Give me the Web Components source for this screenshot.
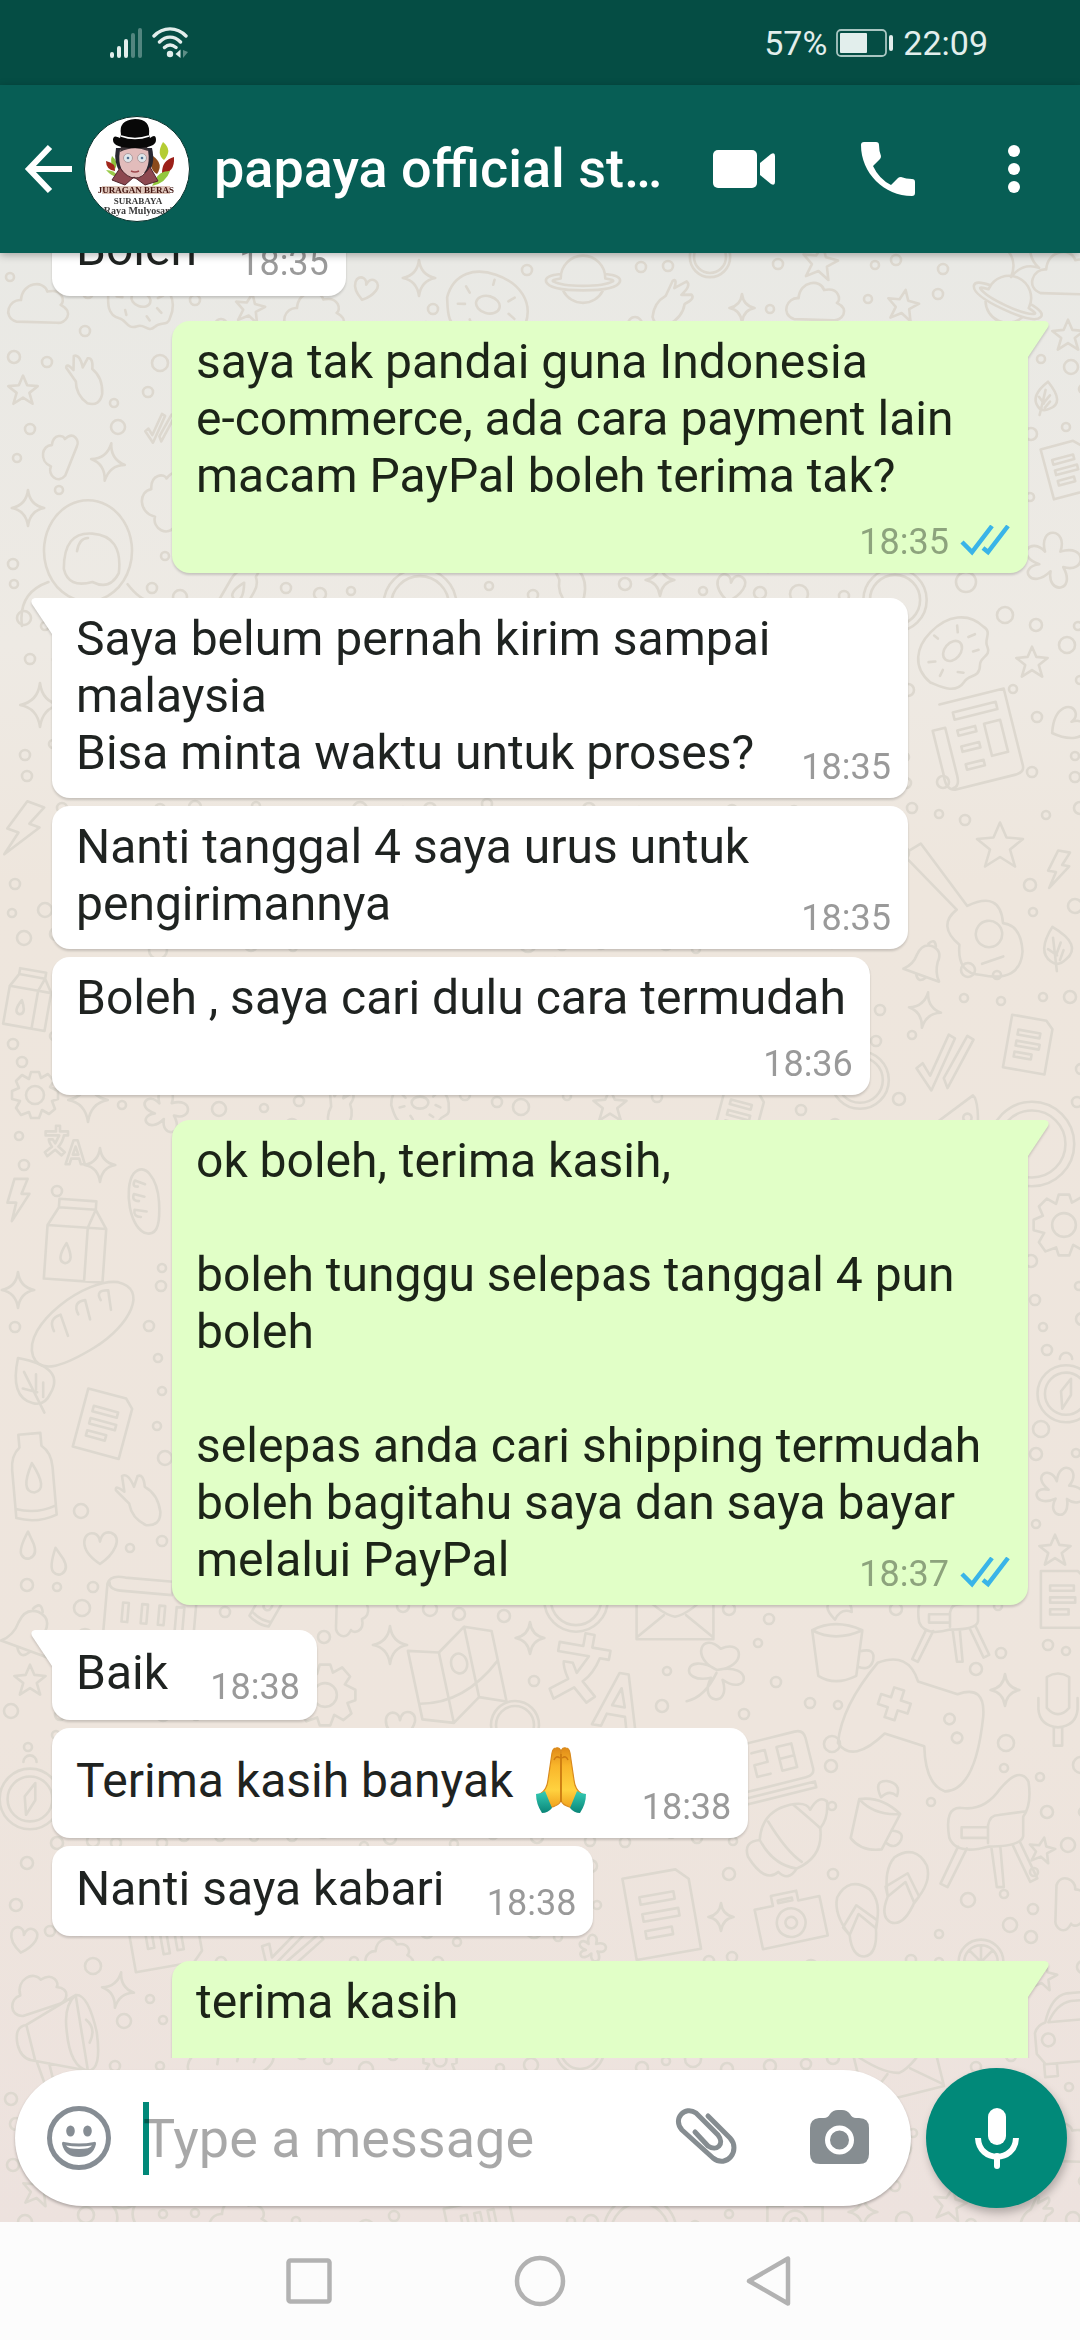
<!DOCTYPE html>
<html lang="ms">
<head>
<meta charset="utf-8">
<meta name="viewport" content="width=device-width, initial-scale=1">
<title>papaya official store</title>
<style>
  html, body {
    margin: 0;
    height: 100%;
  }
  body {
    font-family: Roboto, "Liberation Sans", sans-serif;
    color: #1f2321;
  }
</style>
</head>
<body>
<chat-screen>
  <status-bar slot="top" battery="57%" time="22:09"></status-bar>
  <chat-header slot="top">papaya official st…</chat-header>
  <message-list scroll="47">
    <chat-bubble time="18:35" compact>Boleh</chat-bubble>
    <chat-bubble time="18:35" out first below>saya tak pandai guna Indonesia
e-commerce, ada cara payment lain macam PayPal boleh terima tak?</chat-bubble>
    <chat-bubble time="18:35" first>Saya belum pernah kirim sampai malaysia
Bisa minta waktu untuk proses?</chat-bubble>
    <chat-bubble time="18:35">Nanti tanggal 4 saya urus untuk pengirimannya</chat-bubble>
    <chat-bubble time="18:36" below>Boleh , saya cari dulu cara termudah</chat-bubble>
    <chat-bubble time="18:37" out first>ok boleh, terima kasih,

boleh tunggu selepas tanggal 4 pun boleh

selepas anda cari shipping termudah boleh bagitahu saya dan saya bayar melalui PayPal</chat-bubble>
    <chat-bubble time="18:38" first compact>Baik</chat-bubble>
    <chat-bubble time="18:38">Terima kasih banyak <praying-hands></praying-hands></chat-bubble>
    <chat-bubble time="18:38" compact>Nanti saya kabari</chat-bubble>
    <chat-bubble out first wide>terima kasih</chat-bubble>
  </message-list>
  <message-composer></message-composer>
  <nav-bar slot="bottom"></nav-bar>
</chat-screen>

<script>
/**
 * Creates a template from a string of markup.
 *
 * @param {string} markup - the markup.
 * @returns {HTMLTemplateElement} the template.
 */
const createTemplate = (markup) => {
  const template = document.createElement('template')
  template.innerHTML = markup
  return template
}

/**
 * Base class that clones its static template into a shadow root.
 */
class BaseElement extends HTMLElement {
  constructor () {
    super()
    this.attachShadow({ mode: 'open' })
      .appendChild(this.constructor.template.content.cloneNode(true))
  }
}

customElements.define('status-bar',
  class extends BaseElement {
    static template = createTemplate(`
      <style>
        :host {
          display: flex;
          align-items: center;
          justify-content: space-between;
          box-sizing: border-box;
          height: 85px;
          padding: 0 92px 0 108px;
          background: #054d44;
          color: #e2eeec;
          font-size: 34px;
          line-height: 40px;
        }
        div {
          display: flex;
          align-items: center;
          gap: 8px;
        }
        svg { display: block; }
      </style>
      <div>
        <svg width="36" height="32" viewBox="0 0 36 32" stroke-width="4" stroke-linecap="round" stroke="#e2eeec">
          <path d="M4 27v2M11 21v8M18 14v15"/>
          <path d="M25 8v21M32 3v26" opacity=".35"/>
        </svg>
        <svg width="38" height="32" viewBox="0 0 38 32" fill="none" stroke="#e2eeec" stroke-width="3.4" stroke-linecap="round">
          <path d="M2 9C11-.5 25-.5 34 9M7.500 15C14 8.500 22 8.500 28.500 15M12.500 20.500C16 17.300 20 17.300 24 20.500"/>
          <circle cx="18" cy="27" r="3.200" fill="#e2eeec" stroke="none"/>
          <path d="M23.500 27l5-4.500v8.500z" fill="#e2eeec" stroke="none"/>
          <path d="M31 23l5 2-5 6z" fill="#e2eeec" stroke="none" opacity=".4"/>
        </svg>
      </div>
      <div>
        <span class="battery"></span>
        <svg width="60" height="30" viewBox="0 0 60 30">
          <rect x="2" y="2" width="49" height="26" rx="4" fill="none" stroke="#a9c6c2" stroke-width="1.800"/>
          <rect x="5" y="5" width="27" height="20" rx="1" fill="#e2eeec"/>
          <rect x="54" y="7" width="4" height="16" rx="2" fill="#e2eeec"/>
        </svg>
        <span class="time"></span>
      </div>
    `)

    connectedCallback () {
      this.shadowRoot.querySelector('.battery').textContent = this.getAttribute('battery')
      this.shadowRoot.querySelector('.time').textContent = this.getAttribute('time')
    }
  })

customElements.define('contact-avatar',
  class extends BaseElement {
    static template = createTemplate(`
      <style>
        :host { display: block; width: 106px; height: 106px; }
        svg { display: block; }
      </style>
      <svg width="106" height="106" viewBox="0 0 106 106" role="img" aria-label="Juragan Beras Surabaya">
        <clipPath id="round"><circle cx="53" cy="53" r="52"/></clipPath>
        <circle cx="53" cy="53" r="52.500" fill="#fff" stroke="#06302b"/>
        <g clip-path="url(#round)">
          <path d="M79 26q10 8 1 18q-8-6-1-18z" fill="#b4cc33"/>
          <path d="M69 40q11 8 4 18q-9-5-4-18z" fill="#8a4a1b"/>
          <path d="M90 41q1 16-12 16q0-13 12-16z" fill="#9c2019"/>
          <path d="M71 64q4-9 15-9q-4 12-18 15z" fill="#93c83e"/>
          <path d="M28 40q7 6 3 13q-6-6-3-13z" fill="#8fc23c"/>
          <path d="M22 45q10 2 9 10q-9-1-9-10z" fill="#a1261b"/>
          <path d="M22 54q7 8 12 6q-4-6-12-6z" fill="#9acb4a"/>
          <path d="M32 32h36q4 18-5 25H37q-8-9-5-25z" fill="#272630"/>
          <path d="M36 34q14-7 28 0q4 24-14 29q-18-5-14-29z" fill="#e2bcbb"/>
          <path d="M36 36q14-7 28-1l-1-5H37z" fill="#3b3337"/>
          <g fill="#dfe6ea" stroke="#b09a9c" stroke-width="1">
            <circle cx="44" cy="42" r="4.500"/><circle cx="58" cy="42" r="4.500"/>
          </g>
          <circle cx="44" cy="42" r="1.300" fill="#537191"/><circle cx="58" cy="42" r="1.300" fill="#537191"/>
          <path d="M47 55q4 2 8 0" stroke="#a04a4f" stroke-width="1.500" fill="none"/>
          <path d="M36 52l-8 12 13 5 9-8 11 8 13-4-8-14q-8 12-15 11-8 0-15-10z" fill="#8d4850" stroke="#51262c"/>
          <path d="M37 19Q34 4 51 3q16 0 14 16l1 3q6-5 6 2 0 8-21 8-22 0-22-8 0-6 7-2z" fill="#080808"/>
          <path d="M37 20q14 5 28 0" stroke="#fff" stroke-width="1.400" fill="none"/>
          <path d="M18 70h68v8H18z" fill="#dfc6ba"/>
          <g font-family="Liberation Serif, serif" font-weight="700" text-anchor="middle">
            <text x="52" y="77" font-size="9" fill="#42130f">JURAGAN BERAS</text>
            <text x="54" y="88" font-size="9" fill="#3a3a3a">SURABAYA</text>
            <text x="54" y="98" font-size="10" fill="#3a3a3a">Raya Mulyosari</text>
          </g>
        </g>
      </svg>
    `)
  })

customElements.define('chat-header',
  class extends BaseElement {
    static template = createTemplate(`
      <style>
        :host {
          display: flex;
          align-items: center;
          box-sizing: border-box;
          height: 168px;
          padding: 0 52px 0 24px;
          background: #075e55;
          color: #fff;
          position: relative;
          z-index: 1;
          box-shadow: 0 2px 8px rgba(0, 0, 0, .3);
        }
        button {
          flex: none;
          padding: 0;
          border: 0;
          background: none;
          color: inherit;
        }
        svg { display: block; }
        contact-avatar { flex: none; margin-left: 10px; }
        h1 {
          flex: 1;
          min-width: 0;
          margin: 0 0 0 24px;
          overflow: hidden;
          white-space: nowrap;
          font-size: 54px;
          font-weight: 500;
          line-height: 64px;
        }
        .actions { display: flex; gap: 80px; }
      </style>
      <button aria-label="Back">
        <svg width="50" height="50" viewBox="0 0 50 50" fill="none" stroke="#fff" stroke-width="6"><path d="M26 3L5 25l21 22M4 25h44"/></svg>
      </button>
      <contact-avatar></contact-avatar>
      <h1><slot></slot></h1>
      <div class="actions">
        <button aria-label="Video call">
          <svg width="64" height="64" viewBox="0 0 64 64" fill="#fff"><rect x="1" y="13" width="44" height="38" rx="5"/><path d="M48 26l11-9q4-2 4 2v26q0 4-4 2l-11-9z"/></svg>
        </button>
        <button aria-label="Voice call">
          <svg width="64" height="64" viewBox="0 0 64 64" fill="#fff"><path d="M8 5h12q3 0 3 3 0 6 2 11 0 2-1 3l-7 7q6 13 18 19l7-7q1-1 3-1 5 2 11 2 3 0 3 3v11q0 3-3 3C28 59 5 36 5 8q0-3 3-3z"/></svg>
        </button>
        <button aria-label="More options">
          <svg width="28" height="64" viewBox="0 0 28 64" fill="#fff"><circle cx="14" cy="14" r="6"/><circle cx="14" cy="32" r="6"/><circle cx="14" cy="50" r="6"/></svg>
        </button>
      </div>
    `)
  })

// Line drawings of the wallpaper, each about 100 units wide round 0,0.
const doodles = {
  star: 'M0-45L13-15 46-12 20 9 30 43 0 24-30 43-20 9-46-12-13-15Z',
  spark: 'M0-50Q5-8 45 0 6 7 0 50-6 7-45 0-5-8 0-50Z',
  cloud: 'M-38 26C-62 18-50-12-30-10-28-40 8-44 14-24 40-30 44-6 36-2 60 10 44 30 30 28Z',
  heart: 'M0 40C-60 0-40-44-14-36Q-2-32 0-16 6-44 28-38C58-26 36 16 0 40Z',
  planet: 'M-30-3A30 30 0 0 1 30-3M-27 14A30 30 0 0 0 27 14M-30-8Q-52-6-50 2-46 14 0 14 46 14 50 2 52-6 30-8M-30-2Q-44 0-40 2-30 8 0 8 30 8 40 2 44 0 30-2',
  drop: 'M0-45Q-30 10-20 28-10 44 6 38 30 28 18-6Z',
  donut: 'M-48 0C-48-30-25-42 0-40 30-38 50-20 48 6 50 20 36 16 32 26 26 38 16 26 8 34-4 44-10 30-20 32-40 34-44 12-48 0ZM-14-4A14 10 0 1 0 14-4 14 10 0 1 0-14-4M-30-18l6 6M-34 4l8-2M28-20l-6 6M34 4l-8-4M0-28v-6M-16 18l4 6M16 16l6 4',
  page: 'M-32-44H24L36-32V42H-32ZM-18-22H18V-14H-18ZM-18-4H20V4H-18ZM-18 14H10V22H-18Z',
  news: 'M-34-46H38V40Q38 48 28 48H-40Q-50 46-48 30V-20H-34V34Q-34 46-42 46M-22-34H26V-26H-22ZM-22-14H-2V-8H-22ZM-22 4H-2V10H-22ZM8-14H26V22H8ZM-22 24H-2V30H-22Z',
  bolt: 'M-8-48H22L8-14H26L-14 48-4 6H-24Z',
  leaf: 'M-30-45Q50-30 24 14 14 36-6 30-44 20-30-45ZM-20-22L14 46M0-18V8M12-4V20M-22 6L2 12',
  bread: 'M-48 22C-54-8 10-42 38-34 64-24 44 6 8 22-20 34-44 40-48 22ZM-26 2Q-30-10-18-12L-14 8M-2-10Q-6-22 6-22L8-4M20-20Q16-30 28-28L28-10',
  bell: 'M-38 28Q-22 14-22-8-20-34 2-34 24-32 22-8 24 14 38 28ZM-8-36Q0-52 8-36M-10 30Q0 46 10 30',
  bottle: 'M-12-32V-46H12V-32Q22-24 22-8V44Q0 52-22 44V-8Q-22-24-12-32ZM0-14Q-16 16 0 18 16 16 0-14ZM-22 34Q0 42 22 34',
  carton: 'M-34-18L-22-40H22L36-18V46H-34ZM-34-18H14L22-40M14-18V46M14-18H36M-22-40V-50H22V-40M-10 2Q-22 24-10 26 2 24-10 2Z',
  gear: 'M-8-46H8L12-34 26-42 38-28 30-16 46-8V8L34 12 40 28 28 38 14 30 8 46H-8L-12 34-28 40-38 26-30 12-46 8V-8L-32-14-38-28-26-40-12-32ZM-18 0A18 18 0 1 0 18 0 18 18 0 1 0-18 0',
  guitar: 'M-44-50L-30-56 4 6Q36-4 34 26 50 30 48 54 42 82 8 70-14 66-8 40-26 20-6 8L-44-44ZM8 34A12 12 0 1 0 32 34 12 12 0 1 0 8 34M10 60L30 56',
  ticks: 'M-46 10L-36 2-24 22 6-44 16-38-22 46ZM-2 26L4 42 46-36 36-42Z',
  astronaut: 'M-38 6A40 46 0 1 1 38 6 40 46 0 0 1-38 6ZM-22 8Q-22-26 4-24 32-22 28 12 20 28 4 20-18 26-22 8ZM-10-8Q-8-20 0-20M-36 20Q-64 30-60 60M36 22Q50 40 60 36',
  hand: 'M-30-40Q-20-46-10-22L-4-40Q6-44 8-22 30-10 34 20 34 44 10 42-14 30-18 6L-40-16Q-42-26-26-14Z',
  map: 'M-44-34L-14-26 16-46 42-36V36L16 26-14 46-44 36ZM-14-26V46M16-46V26M-44 20Q0 30 42-6M0-20A8 10 0 1 1 0-2 8 10 0 0 1 0-20',
  translate: 'M-46-34H-20V-48H-10V-34H10V-24H0Q-4-6-14 4L2 18-6 26-22 12-42 28-48 18-30 4Q-38-8-38-14H-28L-22-4-12-24H-46ZM4 48L24-12H34L52 48H42L38 34H18L14 48ZM22 24H36L29 4Z',
  clover: 'M0 0C-40-10-30-50 0-30 30-50 40-10 0 0 50-20 50 30 10 12 30 50-20 50-6 12-50 30-50-20 0 0M0 4Q-10 40-34 50',
  gamepad: 'M-40-30Q-20-46-6-26H26Q44-40 50-16 62 40 40 48 24 48 14 20H-18Q-34 50-50 38-56 10-40-30ZM-30-8H-22V-16H-14V-8H-6V0H-14V8H-22V0H-30ZM22-6A4 4 0 1 0 30-6 4 4 0 1 0 22-6M32 6A4 4 0 1 0 40 6 4 4 0 1 0 32 6',
  mic: 'M-16-50Q0-60 16-50V-6Q0 12-16-6ZM-28-20V-4Q-26 20 0 22 26 20 28-4V-20M-6 22V48H6V22',
  compass: 'M-46 6A46 46 0 1 0 46 6 46 46 0 1 0-46 6M-34 6A34 34 0 1 0 34 6 34 34 0 1 0-34 6M8-18L-8 2 -6 30 8 8ZM-10-50A10 10 0 1 1 10-50',
  clock: 'M-46-30H34Q46-30 46-18V22Q46 32 34 32H-46ZM-50 40H44V48H-50M-28-16H-10V0H-28V16H-10M6-16H26V16H6ZM6 0H26',
  cup: 'M-30-26Q0-10 36-26M-30-26Q0-42 36-26L28 34Q0 48-22 34ZM32 2Q54-4 50 14 46 28 30 22M0-40Q-20-60 0-66 22-70 22-50 8-56 0-40',
  croissant: 'M-50 20Q-56 2-36 0-34-34 0-42 20-46 24-36 34-54 44-46 46-26 36-14 40 20 8 34-2 50-14 38-30 52-50 20ZM-36 0Q-20 30 8 34M-26-22Q-4 14 14 26M4-42Q30-20 36-14',
  chair: 'M-44 18Q-50-18-30-16-4-12 14-38 36-64 46-46 50-20 40-6V16Q38 28 0 28-36 38-44 18ZM0 24V4Q2-8 12-8L42-12M-30 6H0V18H-30ZM-34 28L-54 70-46 74-24 30M4 30L10 74 18 74 14 28M28 26L48 68 56 64 36 22',
  sandal: 'M-22-36Q0-60 22-36 34-16 18 14 12 50-6 48-22 44-18 16-32-16-22-36ZM-24 4L0-20 22 6 18 16 0-8-18 16Z',
  camera: 'M-46-20H-20V-34H16V-20H46V36H-46ZM-20 8A20 20 0 1 0 20 8 20 20 0 1 0-20 8M-8 8A8 8 0 1 0 8 8 8 8 0 1 0-8 8M-12-26H8V-22H-12Z',
  flower: 'M-10-12C-20-50 24-46 12-12 50-24 50 20 16 10 36 46-8 50-2 16-30 44-50 10-18 6-54-6-30-34-10-12Z',
  megaphone: 'M-46 14Q-50-6-36-8L20-42 34 44-30 32Q-42 30-46 14ZM-36-8L-26 32M20-42Q6-30 10 0 14 40 34 44 50 44 44 0 34-44 20-42M32-14Q44-4 36 12M-24 34L-14 62-4 60-10 36',
  car: 'M-44 26V0Q-40-10-30-12-20-44 0-46H50V40H-34ZM-26-12H44V-36H4Q-14-34-26-12ZM-36 10A8 8 0 1 0-20 10 8 8 0 1 0-36 10M-36 40V56H-20V40',
  envelope: 'M-48-32H48V34H-48ZM-48-30Q-20 2 0 6 20 2 48-30M-48 32L-14 4M48 32L14 4',
  ring: 'M-48 0A48 48 0 1 0 48 0 48 48 0 1 0-48 0M-38 0A38 38 0 1 0 38 0 38 38 0 1 0-38 0',
  orange: 'M-40 0A40 40 0 1 0 40 0 40 40 0 1 0-40 0M-30 0A30 30 0 1 0 30 0 30 30 0 1 0-30 0M0-30V30M-30 0H30M-21-21L21 21M-21 21L21-21',
  cheese: 'M-46 26L40-38Q50-30 46 30L-40 46ZM-30 28A6 6 0 1 0-18 28 6 6 0 1 0-30 28M0 14A7 7 0 1 0 14 14 7 7 0 1 0 0 14M26-6A6 6 0 1 0 38-6 6 6 0 1 0 26-6'
}

// name, x, y, size, turn
const placed = [
  ['cloud', 39, 306, 60, 0], ['donut', 140, 302, 70, 20], ['star', 250, 308, 32, 10], ['cloud', 315, 314, 60, 0],
  ['heart', 365, 289, 28, 15], ['spark', 419, 278, 36, 0], ['donut', 487, 308, 86, 15], ['planet', 583, 280, 74, 0],
  ['hand', 672, 304, 54, 70], ['ring', 710, 257, 42, 0], ['star', 820, 262, 38, 10], ['spark', 742, 308, 28, 0],
  ['cloud', 816, 304, 58, 0], ['star', 903, 305, 34, 10], ['planet', 1008, 300, 74, 25], ['spark', 1022, 258, 44, 30],
  ['cloud', 1066, 276, 66, 0], ['hand', 86, 380, 54, 10], ['star', 23, 390, 32, 0], ['cloud', 60, 455, 46, -70],
  ['spark', 108, 462, 38, 10], ['spark', 28, 508, 36, 0], ['ticks', 160, 428, 32, 0], ['cloud', 164, 500, 60, -80],
  ['astronaut', 88, 560, 110, 0], ['star', 1068, 335, 34, 0], ['leaf', 1046, 400, 34, 40], ['page', 1066, 470, 60, -15],
  ['flower', 1052, 560, 70, 0], ['bottle', 240, 590, 60, 30], ['ring', 420, 605, 76, 0], ['heart', 730, 588, 34, 10],
  ['hand', 570, 580, 56, 20], ['spark', 660, 580, 32, 0], ['ring', 895, 600, 66, 0], ['donut', 955, 653, 80, -50],
  ['star', 1032, 662, 34, 0], ['news', 980, 738, 92, -14], ['spark', 40, 705, 44, 0], ['heart', 1066, 725, 40, 60],
  ['bolt', 22, 830, 60, 20], ['star', 1000, 845, 50, 0], ['bolt', 1058, 870, 40, 10], ['guitar', 962, 900, 110, -8],
  ['bell', 926, 962, 50, 20], ['leaf', 1058, 950, 44, 20], ['spark', 925, 1010, 36, 10], ['ticks', 945, 1062, 62, 0],
  ['page', 1027, 1045, 62, 10], ['gear', 35, 1095, 50, 0], ['spark', 88, 1100, 44, 0], ['carton', 28, 1000, 60, 10],
  ['cheese', 945, 1122, 70, 0], ['ring', 1032, 1144, 88, 0], ['flower', 165, 1110, 56, 0], ['hand', 340, 1110, 50, 40],
  ['donut', 420, 1105, 60, 0], ['star', 610, 1105, 36, 0], ['page', 738, 1115, 60, 15], ['ring', 860, 1080, 60, 0],
  ['bolt', 18, 1200, 44, 0], ['spark', 100, 1165, 34, 0], ['translate', 64, 1145, 40, 0], ['carton', 75, 1242, 84, 4],
  ['bread', 145, 1202, 60, -70], ['gear', 1064, 1225, 66, 0], ['spark', 18, 1290, 36, 0], ['bread', 82, 1325, 110, -8],
  ['leaf', 36, 1385, 60, 0], ['page', 102, 1424, 70, 15], ['bottle', 33, 1476, 92, -5], ['hand', 140, 1500, 60, 0],
  ['heart', 100, 1548, 40, 0], ['drop', 28, 1546, 32, 0], ['drop', 58, 1562, 32, -10], ['compass', 1066, 1390, 62, 0],
  ['flower', 1060, 1490, 60, 20], ['star', 1055, 1550, 34, 0], ['page', 1062, 1600, 66, 0], ['bell', 30, 1632, 64, 20],
  ['news', 150, 1626, 96, 95], ['star', 30, 1680, 34, 0], ['bottle', 270, 1602, 50, 30], ['cloud', 350, 1612, 50, 90],
  ['spark', 390, 1645, 38, 0], ['spark', 530, 1638, 32, 0], ['map', 458, 1675, 100, -12], ['ring', 576, 1600, 66, 0],
  ['translate', 596, 1680, 92, 10], ['clover', 717, 1670, 72, 10], ['envelope', 675, 1612, 80, 0], ['cup', 835, 1650, 76, 0],
  ['chair', 950, 1610, 70, 0], ['gear', 325, 1695, 66, 0], ['ring', 515, 1725, 50, 0], ['heart', 400, 1726, 36, 0],
  ['gamepad', 915, 1716, 130, 18], ['spark', 1005, 1690, 32, 0], ['mic', 1058, 1712, 70, 0], ['compass', 30, 1795, 66, 0],
  ['clock', 775, 1760, 76, -14], ['cup', 872, 1822, 66, 20], ['croissant', 790, 1840, 84, 0], ['chair', 988, 1822, 88, 0],
  ['star', 1042, 1850, 28, 10], ['page', 660, 1915, 96, -10], ['camera', 790, 1917, 72, -12], ['sandal', 860, 1920, 76, -14],
  ['sandal', 904, 1888, 76, 14], ['spark', 721, 1917, 28, 0], ['flower', 592, 1948, 34, 0], ['orange', 981, 1962, 56, 0],
  ['cloud', 1070, 1905, 52, 90], ['megaphone', 58, 2032, 88, 0], ['cloud', 38, 1995, 56, -20], ['spark', 118, 1990, 36, 10],
  ['heart', 23, 1940, 32, 10], ['page', 164, 1938, 80, 80], ['cloud', 390, 1956, 48, 0], ['ticks', 290, 1950, 60, 20],
  ['star', 1043, 1976, 30, 10], ['car', 1070, 2030, 80, -5], ['envelope', 898, 2068, 84, -14], ['ring', 580, 2050, 50, 0],
  ['bread', 230, 2062, 80, 20], ['gear', 440, 2060, 36, 0], ['star', 38, 2190, 34, 10], ['spark', 125, 2216, 36, 40],
  ['cloud', 240, 2220, 60, 0], ['page', 480, 2226, 76, 78], ['camera', 795, 2218, 60, 0], ['spark', 863, 2212, 32, 0],
  ['star', 950, 2204, 36, 10], ['hand', 1036, 2216, 44, 70], ['ring', 640, 2232, 76, 0], ['cloud', 1064, 2145, 60, 0]
]

customElements.define('doodle-wallpaper',
  class extends BaseElement {
    static template = createTemplate(`
      <style>
        :host {
          display: block;
          overflow: hidden;
          background: linear-gradient(#e9e9e5, #eeeae4 20%, #eee6dd 32%, #eee5dd 75%, #ede2de);
        }
        svg { display: block; width: 100%; }
      </style>
      <svg viewBox="0 253 1080 1970" fill="none" stroke="#ddd8cf" stroke-width="2.600" stroke-linejoin="round" stroke-linecap="round" aria-hidden="true"></svg>
    `)

    connectedCallback () {
      const shapes = placed.map(([name, x, y, size, turn]) =>
        `<path d="${doodles[name]}" vector-effect="non-scaling-stroke" transform="translate(${x} ${y}) rotate(${turn}) scale(${size / 100})"/>`)
      this.shadowRoot.querySelector('svg').innerHTML = shapes.join('') + this.bubbles()
    }

    /**
     * Fills the room between the drawings with small rings.
     *
     * @returns {string} the circles.
     */
    bubbles () {
      let circles = ''
      let seed = 7
      const next = () => {
        seed = (seed * 16807) % 2147483647
        return seed / 2147483647
      }
      for (let y = 260; y < 2222; y += 32) {
        for (let x = 10; x < 1080; x += 34) {
          const cx = Math.round(x + next() * 20)
          const cy = Math.round(y + next() * 18)
          const r = 4 + Math.round(next() * next() * 6)
          const free = placed.every(([, px, py, size]) => Math.hypot(px - cx, py - cy) > size / 2 + r + 5)
          if (free) {
            circles += `<circle cx="${cx}" cy="${cy}" r="${r}"/>`
          }
        }
      }
      return circles
    }
  })

customElements.define('chat-screen',
  class extends BaseElement {
    static template = createTemplate(`
      <style>
        :host {
          display: flex;
          flex-direction: column;
          height: 100vh;
        }
        main {
          flex: 1;
          min-height: 0;
          display: grid;
          grid-template: minmax(0, 1fr) / minmax(0, 1fr);
        }
        main > * { grid-area: 1 / 1; }
        .column {
          display: flex;
          flex-direction: column;
          min-height: 0;
          z-index: 0;
        }
      </style>
      <slot name="top"></slot>
      <main>
        <doodle-wallpaper></doodle-wallpaper>
        <div class="column"><slot></slot></div>
      </main>
      <slot name="bottom"></slot>
    `)
  })

customElements.define('chat-bubble',
  class extends BaseElement {
    static template = createTemplate(`
      <style>
        :host {
          --paper: #fff;
          flex: none;
          align-self: flex-start;
          display: grid;
          position: relative;
          box-sizing: border-box;
          max-width: calc(100% - 120px);
          border-radius: 18px;
          background: var(--paper);
          filter: drop-shadow(0 2px 1px rgba(0, 0, 0, .16));
          font-size: 48px;
          line-height: 57px;
        }
        :host([out]) {
          --paper: #e1ffc7;
          align-self: flex-end;
          color: #1c2418;
        }
        :host([first]) {
          margin-top: 17px;
          border-top-left-radius: 0;
        }
        :host([out][first]) {
          border-radius: 18px 0 18px 18px;
        }
        :host([wide]) {
          width: 100%;
          min-height: 138px;
        }
        p {
          grid-area: 1 / 1;
          margin: 0;
          padding: 12px 24px 17px;
          white-space: pre-line;
        }
        :host([compact]) p { padding: 14px 24px 19px; }
        .room {
          display: inline-block;
          width: 125px;
          height: 1px;
        }
        .meta {
          grid-area: 1 / 1;
          place-self: end;
          display: flex;
          align-items: center;
          gap: 10px;
          padding: 0 17px 10px;
          color: #9a9a9a;
          font-size: 36px;
          line-height: 42px;
        }
        :host([compact]) .meta { padding-bottom: 12px; }
        :host([out]) .meta { color: #8da37d; }
        :host([below]) p { padding-bottom: 0; }
        :host([below]) .meta { grid-area: 2 / 1; margin-top: 17px; }
        :host([below]) .room, .tail, .ticks { display: none; }
        :host([out]) .ticks { display: block; }
        /* the tail hangs outside the bubble's upper corner */
        :host([first]) .tail {
          display: block;
          position: absolute;
          top: 0;
          right: 100%;
          fill: var(--paper);
        }
        :host([out][first]) .tail {
          right: auto;
          left: 100%;
          transform: scaleX(-1);
        }
      </style>
      <svg class="tail" width="21" height="36" viewBox="0 0 21 36" aria-hidden="true"><path d="M21 0H4Q-1 1 1 6L21 36Z"/></svg>
      <p><slot></slot><span class="room"></span></p>
      <div class="meta">
        <time></time>
        <svg class="ticks" width="52" height="34" viewBox="0 0 52 34" fill="none" stroke="#3ab4e8" stroke-width="4.500" role="img" aria-label="Read"><path d="M3 17L13 27 33 1M24 23L29 27 49 1"/></svg>
      </div>
    `)

    connectedCallback () {
      if (this.hasAttribute('time')) {
        this.shadowRoot.querySelector('time').textContent = this.getAttribute('time')
      } else {
        this.shadowRoot.querySelector('.meta').remove()
      }
    }
  })

customElements.define('praying-hands',
  class extends BaseElement {
    static template = createTemplate(`
      <style>
        :host {
          display: inline-block;
          width: 68px;
          height: 81px;
          margin: 0 3px;
          vertical-align: -24px;
          white-space: normal;
        }
        svg { display: block; }
      </style>
      <svg width="68" height="81" viewBox="0 0 68 81" role="img" aria-label="folded hands">
        <defs>
          <linearGradient id="skin" x1="0" y1="0" x2="0" y2="1"><stop offset="0" stop-color="#e08a17"/><stop offset=".3" stop-color="#f9b62b"/><stop offset=".7" stop-color="#ffd23f"/><stop offset="1" stop-color="#f0a01c"/></linearGradient>
          <linearGradient id="cuff" x1="0" y1="0" x2="0" y2="1"><stop offset="0" stop-color="#35cdb6"/><stop offset="1" stop-color="#0a8577"/></linearGradient>
          <g id="hand">
            <path d="M33 12Q32 7 28 8 25 8 24 13L20 40Q19 50 12 54L20 68Q32 66 33 60Z" fill="url(#skin)" stroke="#d98a1c" stroke-width="1.200"/>
            <path d="M32 18Q28 15 26 20" fill="none" stroke="#cf7a12" stroke-width="1.500"/>
            <path d="M8 54Q13 54 17 51L24 68Q20 73 14 73 8 64 8 54Z" fill="url(#cuff)"/>
          </g>
        </defs>
        <use href="#hand"/>
        <use href="#hand" transform="translate(66 0) scale(-1 1)"/>
        <path d="M33 14V62" stroke="#c9780f" stroke-width="1.500"/>
      </svg>
    `)
  })

customElements.define('message-composer',
  class extends BaseElement {
    static template = createTemplate(`
      <style>
        :host {
          display: flex;
          align-items: center;
          gap: 15px;
          padding: 10px 13px 14px 15px;
        }
        .field {
          flex: 1;
          min-width: 0;
          display: flex;
          align-items: center;
          box-sizing: border-box;
          height: 136px;
          padding: 0 40px 0 32px;
          border-radius: 68px;
          background: #fff;
          box-shadow: 0 2px 3px rgba(0, 0, 0, .25);
        }
        button {
          flex: none;
          padding: 0;
          border: 0;
          background: none;
        }
        svg { display: block; }
        .caret {
          flex: none;
          width: 6px;
          height: 73px;
          margin: 0 -6px 0 32px;
          background: #018979;
        }
        input {
          flex: 1;
          min-width: 0;
          height: 76px;
          padding: 0;
          border: 0;
          outline: 0;
          background: none;
          color: #1f2321;
          font: 54px/64px Roboto, "Liberation Sans", sans-serif;
        }
        input::placeholder {
          color: rgba(0, 0, 0, .34);
          opacity: 1;
        }
        .attach { margin-right: 64px; }
        .voice {
          display: grid;
          place-items: center;
          width: 141px;
          height: 140px;
          border-radius: 50%;
          background: #018979;
          box-shadow: 2px 5px 8px rgba(0, 0, 0, .25);
        }
      </style>
      <div class="field">
        <button aria-label="Emoji">
          <svg width="64" height="64" viewBox="0 0 64 64" fill="#868d94">
            <circle cx="32" cy="32" r="29.500" fill="none" stroke="#868d94" stroke-width="5"/>
            <ellipse cx="23.500" cy="25" rx="4.300" ry="5.600"/><ellipse cx="40.500" cy="25" rx="4.300" ry="5.600"/>
            <path d="M17 36q-2-1-2 2 3 13 17 13t17-13q0-3-2-2-15 3-30 0z"/>
            <path d="M19 39.500q13 2 26 0-2 3.500-13 3.500t-13-3.500z" fill="#fff"/>
          </svg>
        </button>
        <span class="caret"></span>
        <input type="text" placeholder="Type a message" aria-label="Type a message">
        <button class="attach" aria-label="Attach">
          <svg width="72" height="64" viewBox="0 0 72 64" fill="none" stroke="#868d91" stroke-width="5" stroke-linecap="round">
            <path d="M37 10L59 32C70 44 56 63 42 52L11 24C1 13 14-1 25 7L47 29C54 38 46 46 37 40L24 26" stroke-linejoin="round"/>
          </svg>
        </button>
        <button aria-label="Camera">
          <svg width="64" height="64" viewBox="0 0 64 64">
            <path d="M12 12h5q4 0 6-4 3-4 8-4h4q5 0 8 4 2 4 6 4h3q10 0 10 10v26q0 10-10 10H13q-10 0-10-10V22q0-9 9-10z" fill="#868d91"/>
            <circle cx="32.500" cy="34" r="12" fill="none" stroke="#fff" stroke-width="5"/>
          </svg>
        </button>
      </div>
      <button class="voice" aria-label="Voice message">
        <svg width="48" height="64" viewBox="0 0 48 64" fill="none" stroke="#fff" stroke-width="6" stroke-linecap="round">
          <rect x="15" y="2" width="18" height="37" rx="9" fill="#fff" stroke="none"/>
          <path d="M5 32c1 25 37 25 38 0" stroke-linecap="butt"/><path d="M24 50v10"/>
        </svg>
      </button>
    `)
  })

customElements.define('nav-bar',
  class extends BaseElement {
    static template = createTemplate(`
      <style>
        :host {
          display: flex;
          align-items: center;
          justify-content: center;
          gap: 178px;
          height: 118px;
          background: #fcfcfc;
        }
        button {
          padding: 0;
          border: 0;
          background: none;
        }
        svg { display: block; }
      </style>
      <button aria-label="Recent apps">
        <svg width="52" height="52" viewBox="0 0 52 52" fill="none" stroke="#b2b2b2" stroke-width="4.500"><rect x="4.500" y="5.500" width="41" height="41" rx="2"/></svg>
      </button>
      <button aria-label="Home">
        <svg width="52" height="52" viewBox="0 0 52 52" fill="none" stroke="#b2b2b2" stroke-width="4.500"><circle cx="26" cy="26" r="23"/></svg>
      </button>
      <button aria-label="Back">
        <svg width="52" height="52" viewBox="0 0 52 52" fill="none" stroke="#b2b2b2" stroke-width="4.500" stroke-linejoin="round"><path d="M44 3.500v45L5 26z"/></svg>
      </button>
    `)
  })

// Defined last: the bubbles need their height before the list can scroll.
customElements.define('message-list',
  class extends BaseElement {
    static template = createTemplate(`
      <style>
        :host {
          display: flex;
          flex-direction: column;
          flex: 1;
          gap: 8px;
          min-height: 0;
          padding: 0 52px 8px;
          overflow: hidden;
        }
      </style>
      <slot></slot>
    `)

    connectedCallback () {
      this.scrollTop = Number(this.getAttribute('scroll'))
    }
  })
</script>
</body>
</html>
